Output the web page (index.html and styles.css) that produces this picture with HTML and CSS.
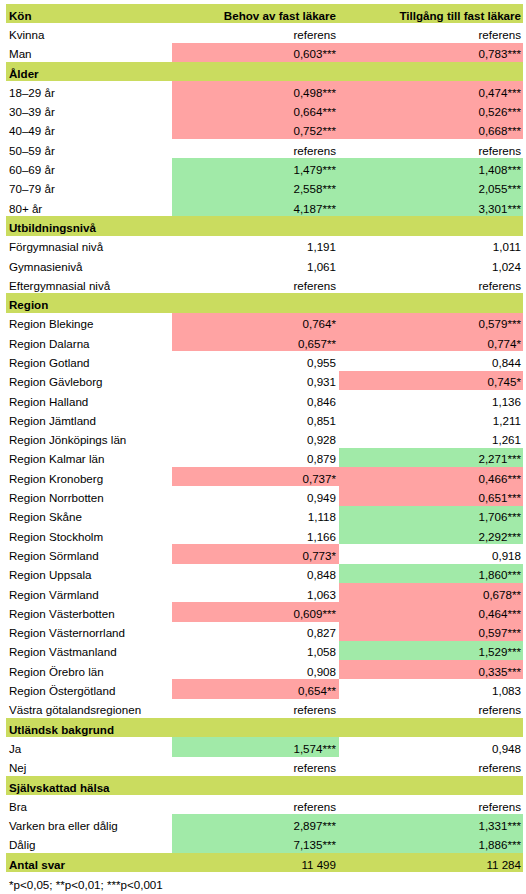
FILE: index.html
```html
<!DOCTYPE html>
<html lang="sv">
<head>
<meta charset="utf-8">
<title>Tabell</title>
<link rel="stylesheet" href="styles.css">
</head>
<body>
<div class="sheet">
  <div class="row sec"><div class="c1">Kön</div><div class="c2">Behov av fast läkare</div><div class="c3">Tillgång till fast läkare</div></div>
  <div class="row"><div class="c1">Kvinna</div><div class="c2">referens</div><div class="c3">referens</div></div>
  <div class="row"><div class="c1">Man</div><div class="c2 neg">0,603***</div><div class="c3 neg">0,783***</div></div>
  <div class="row sec"><div class="c1">Ålder</div><div class="c2"></div><div class="c3"></div></div>
  <div class="row"><div class="c1">18–29 år</div><div class="c2 neg">0,498***</div><div class="c3 neg">0,474***</div></div>
  <div class="row"><div class="c1">30–39 år</div><div class="c2 neg">0,664***</div><div class="c3 neg">0,526***</div></div>
  <div class="row"><div class="c1">40–49 år</div><div class="c2 neg">0,752***</div><div class="c3 neg">0,668***</div></div>
  <div class="row"><div class="c1">50–59 år</div><div class="c2">referens</div><div class="c3">referens</div></div>
  <div class="row"><div class="c1">60–69 år</div><div class="c2 pos">1,479***</div><div class="c3 pos">1,408***</div></div>
  <div class="row"><div class="c1">70–79 år</div><div class="c2 pos">2,558***</div><div class="c3 pos">2,055***</div></div>
  <div class="row"><div class="c1">80+ år</div><div class="c2 pos">4,187***</div><div class="c3 pos">3,301***</div></div>
  <div class="row sec"><div class="c1">Utbildningsnivå</div><div class="c2"></div><div class="c3"></div></div>
  <div class="row"><div class="c1">Förgymnasial nivå</div><div class="c2">1,191</div><div class="c3">1,011</div></div>
  <div class="row"><div class="c1">Gymnasienivå</div><div class="c2">1,061</div><div class="c3">1,024</div></div>
  <div class="row"><div class="c1">Eftergymnasial nivå</div><div class="c2">referens</div><div class="c3">referens</div></div>
  <div class="row sec"><div class="c1">Region</div><div class="c2"></div><div class="c3"></div></div>
  <div class="row"><div class="c1">Region Blekinge</div><div class="c2 neg">0,764*</div><div class="c3 neg">0,579***</div></div>
  <div class="row"><div class="c1">Region Dalarna</div><div class="c2 neg">0,657**</div><div class="c3 neg">0,774*</div></div>
  <div class="row"><div class="c1">Region Gotland</div><div class="c2">0,955</div><div class="c3">0,844</div></div>
  <div class="row"><div class="c1">Region Gävleborg</div><div class="c2">0,931</div><div class="c3 neg">0,745*</div></div>
  <div class="row"><div class="c1">Region Halland</div><div class="c2">0,846</div><div class="c3">1,136</div></div>
  <div class="row"><div class="c1">Region Jämtland</div><div class="c2">0,851</div><div class="c3">1,211</div></div>
  <div class="row"><div class="c1">Region Jönköpings län</div><div class="c2">0,928</div><div class="c3">1,261</div></div>
  <div class="row"><div class="c1">Region Kalmar län</div><div class="c2">0,879</div><div class="c3 pos">2,271***</div></div>
  <div class="row"><div class="c1">Region Kronoberg</div><div class="c2 neg">0,737*</div><div class="c3 neg">0,466***</div></div>
  <div class="row"><div class="c1">Region Norrbotten</div><div class="c2">0,949</div><div class="c3 neg">0,651***</div></div>
  <div class="row"><div class="c1">Region Skåne</div><div class="c2">1,118</div><div class="c3 pos">1,706***</div></div>
  <div class="row"><div class="c1">Region Stockholm</div><div class="c2">1,166</div><div class="c3 pos">2,292***</div></div>
  <div class="row"><div class="c1">Region Sörmland</div><div class="c2 neg">0,773*</div><div class="c3">0,918</div></div>
  <div class="row"><div class="c1">Region Uppsala</div><div class="c2">0,848</div><div class="c3 pos">1,860***</div></div>
  <div class="row"><div class="c1">Region Värmland</div><div class="c2">1,063</div><div class="c3 neg">0,678**</div></div>
  <div class="row"><div class="c1">Region Västerbotten</div><div class="c2 neg">0,609***</div><div class="c3 neg">0,464***</div></div>
  <div class="row"><div class="c1">Region Västernorrland</div><div class="c2">0,827</div><div class="c3 neg">0,597***</div></div>
  <div class="row"><div class="c1">Region Västmanland</div><div class="c2">1,058</div><div class="c3 pos">1,529***</div></div>
  <div class="row"><div class="c1">Region Örebro län</div><div class="c2">0,908</div><div class="c3 neg">0,335***</div></div>
  <div class="row"><div class="c1">Region Östergötland</div><div class="c2 neg">0,654**</div><div class="c3">1,083</div></div>
  <div class="row"><div class="c1">Västra götalandsregionen</div><div class="c2">referens</div><div class="c3">referens</div></div>
  <div class="row sec"><div class="c1">Utländsk bakgrund</div><div class="c2"></div><div class="c3"></div></div>
  <div class="row"><div class="c1">Ja</div><div class="c2 pos">1,574***</div><div class="c3">0,948</div></div>
  <div class="row"><div class="c1">Nej</div><div class="c2">referens</div><div class="c3">referens</div></div>
  <div class="row sec"><div class="c1">Självskattad hälsa</div><div class="c2"></div><div class="c3"></div></div>
  <div class="row"><div class="c1">Bra</div><div class="c2">referens</div><div class="c3">referens</div></div>
  <div class="row"><div class="c1">Varken bra eller dålig</div><div class="c2 pos">2,897***</div><div class="c3 pos">1,331***</div></div>
  <div class="row"><div class="c1">Dålig</div><div class="c2 pos">7,135***</div><div class="c3 pos">1,886***</div></div>
  <div class="row sec total"><div class="c1">Antal svar</div><div class="c2">11 499</div><div class="c3">11 284</div></div>
  <div class="note">*p&lt;0,05; **p&lt;0,01; ***p&lt;0,001</div>
</div>
</body>
</html>
```

FILE: styles.css
```css
html, body {
  margin: 0;
  padding: 0;
  background: #ffffff;
}

body {
  font-family: "Liberation Sans", Arial, sans-serif;
  font-size: 11.6px;
  color: #000000;
}

.sheet {
  padding: 4px 0 0 6px;
  width: 517px;
}

.row {
  display: grid;
  grid-template-columns: 166px 167px 184px;
  height: 19.31px;
}

.row > div {
  display: flex;
  align-items: center;
  padding-top: 3px;
  white-space: nowrap;
  overflow: hidden;
}

.c1 {
  padding-left: 3px;
}

.c2 {
  justify-content: flex-end;
  padding-right: 3px;
}

.c3 {
  justify-content: flex-end;
  padding-right: 2px;
}

.sec {
  background: #cadc5f;
  font-weight: bold;
}

.total .c2,
.total .c3 {
  font-weight: normal;
}

.neg {
  background: #ffa3a3;
}

.pos {
  background: #a1eaa8;
}

.note {
  height: 21px;
  display: flex;
  align-items: center;
  padding: 2px 0 0 3px;
}
```
